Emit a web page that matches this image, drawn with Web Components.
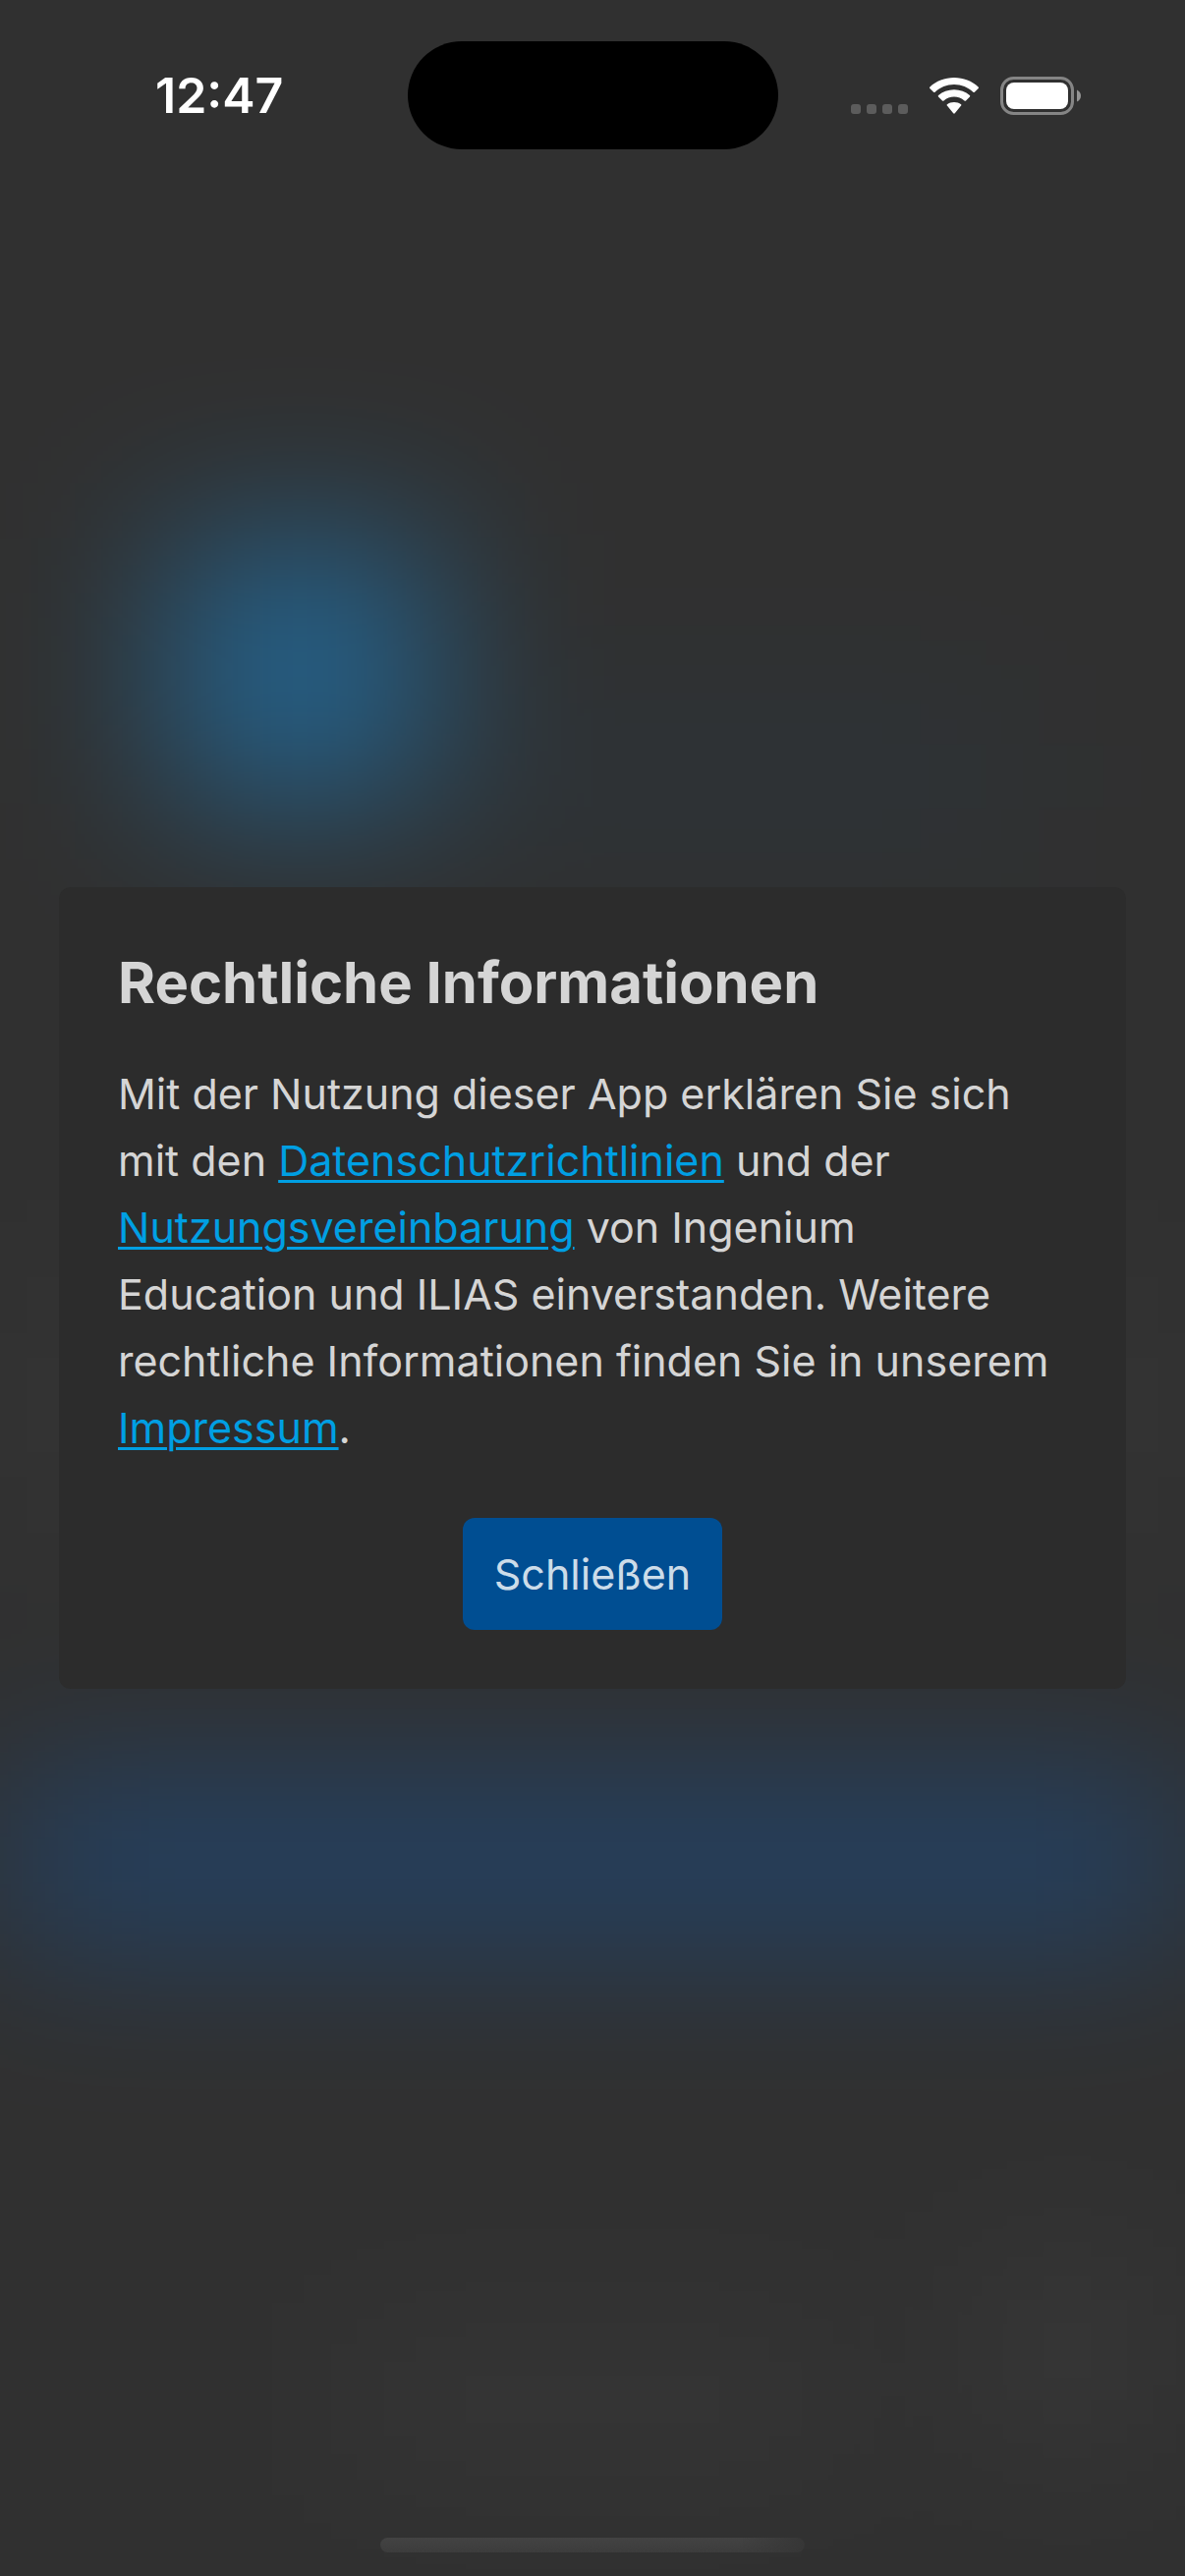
<!DOCTYPE html>
<html lang="de">
<head>
<meta charset="utf-8">
<meta name="viewport" content="width=device-width, initial-scale=1">
<title>Rechtliche Informationen</title>
<style>
  :root {
    --page: #303030;
    --card: #2c2c2c;
    --text: #d5d5d5;
    --link: #009fe3;
    --primary: #004e92;
    --on-primary: #ccdce9;
  }
  body {
    margin: 0;
    background: var(--page);
    color: var(--text);
    font-family: Inter, "Liberation Sans", sans-serif;
  }
</style>
</head>
<body>
<app-screen>
  <status-bar slot="top" time="12:47"></status-bar>
  <info-dialog heading="Rechtliche Informationen">
    Mit der Nutzung dieser App erklären Sie sich mit den
    <text-link href="#datenschutz">Datenschutzrichtlinien</text-link> und der
    <text-link href="#nutzung">Nutzungsvereinbarung</text-link> von Ingenium<br>
    Education und ILIAS einverstanden. Weitere rechtliche Informationen finden Sie in unserem
    <text-link href="#impressum">Impressum</text-link>.
    <primary-button slot="actions">Schließen</primary-button>
  </info-dialog>
  <home-indicator slot="bottom"></home-indicator>
</app-screen>

<script>
  const define = (name, render) =>
    customElements.define(name, class extends HTMLElement {
      connectedCallback() {
        if (this.shadowRoot) return;
        this.attachShadow({ mode: 'open' }).innerHTML = render(this);
      }
    });

  // Full-height screen: status bar, centred content, home indicator, over the blurred start page.
  define('app-screen', () => `
    <style>
      :host { display: flex; flex-direction: column; min-height: 100vh; position: relative; isolation: isolate; }
      .backdrop { position: absolute; inset: 0; overflow: hidden; z-index: -1; }
      /* The opaque border keeps the blur from fading out at the screen edges. */
      .scene { position: absolute; inset: -240px; border: 240px solid var(--page); background: var(--page); filter: blur(84px); }
      .shape { position: absolute; }
      .logo { left: 170px; top: 548px; width: 270px; height: 270px; background: #24618a; }
      .title { left: 500px; top: 730px; width: 530px; height: 120px; background: #2c343a; }
      .login { left: 0; right: 0; top: 1814px; height: 160px; background: #224369; }
      .form { left: 0; right: 0; top: 1300px; height: 260px; background: #343434; }
      .help { right: 40px; bottom: 150px; width: 160px; height: 160px; background: #3a3a3a; }
      .foot { left: 350px; right: 350px; bottom: 130px; height: 100px; background: #383838; }
      main { flex: 1; display: flex; flex-direction: column; justify-content: center; padding: 0 60px; }
    </style>
    <div class="backdrop" aria-hidden="true">
      <div class="scene">
        <div class="shape title"></div>
        <div class="shape logo"></div>
        <div class="shape form"></div>
        <div class="shape login"></div>
        <div class="shape foot"></div>
        <div class="shape help"></div>
      </div>
    </div>
    <slot name="top"></slot>
    <main><slot></slot></main>
    <slot name="bottom"></slot>`);

  define('status-bar', el => `
    <style>
      :host { display: grid; grid-template-columns: 1fr 377px 1fr; height: 110px; padding: 42px 0 0; color: #fff; }
      time { place-self: center; padding-left: 32px; font-size: 50px; font-weight: 600; line-height: 60px; }
      .island { background: #000; border-radius: 55px; }
      .icons { display: flex; align-items: center; justify-content: flex-end; gap: 21px; padding-right: 106px; }
      svg { display: block; }
    </style>
    <time>${el.getAttribute('time')}</time>
    <div class="island"></div>
    <div class="icons">
      <svg width="58" height="40" viewBox="0 0 58 40" fill="#5c5c5c" aria-hidden="true">
        <rect x="0" y="29" width="10" height="10" rx="3"/><rect x="16" y="29" width="10" height="10" rx="3"/>
        <rect x="32" y="29" width="10" height="10" rx="3"/><rect x="48" y="29" width="10" height="10" rx="3"/>
      </svg>
      <svg width="52" height="40" viewBox="0 0 52 40" fill="#fff" aria-hidden="true">
        <path d="M26 9C33.500 9 40.300 11.900 45.400 16.700Q46.200 17.400 46.900 16.700L50.700 12.900Q51.400 12.100 50.600 11.400C44.200 5.500 35.500 2 26 2S7.800 5.500 1.400 11.400Q.6 12.100 1.300 12.900L5.100 16.700Q5.800 17.400 6.600 16.700C11.700 11.900 18.500 9 26 9Z"/>
        <path d="M26 21.500C30 21.500 33.700 23 36.500 25.500Q37.300 26.200 38 25.500L42 21.600Q42.700 20.800 41.900 20.100C37.700 16.300 32.100 14.200 26 14.200S14.300 16.300 10.100 20.100Q9.300 20.800 10 21.600L14 25.500Q14.700 26.200 15.500 25.500C18.300 23 22 21.500 26 21.500Z"/>
        <path d="M33.100 30.600Q33.900 29.900 33.100 29.200C31.200 27.700 28.700 27 26 27S20.800 27.700 18.900 29.200Q18.100 29.900 18.900 30.600L25.200 38.300Q26 39.100 26.800 38.300Z"/>
      </svg>
      <svg width="82" height="40" viewBox="0 0 82 40" aria-hidden="true">
        <rect x="1.500" y="2.500" width="72" height="36" rx="12" fill="none" stroke="#858585" stroke-width="3"/>
        <rect x="6" y="7" width="63" height="27" rx="8" fill="#fff"/>
        <path d="M78 14.500V26.500Q82 24.500 82 20.500T78 14.500Z" fill="#949494"/>
      </svg>
    </div>`);

  define('info-dialog', el => `
    <style>
      :host { display: block; }
      section { display: flex; flex-direction: column; padding: 60px; background: var(--card); border-radius: 12px; }
      h1 { margin: 0 0 42px; font-size: 58px; font-weight: 700; line-height: 74px; }
      p { margin: 0 0 58px; font-size: 43px; line-height: 68px; }
      footer { display: flex; justify-content: center; }
    </style>
    <section role="dialog" aria-labelledby="heading">
      <h1 id="heading">${el.getAttribute('heading')}</h1>
      <p><slot></slot></p>
      <footer><slot name="actions"></slot></footer>
    </section>`);

  define('text-link', el => `
    <style>
      :host { display: inline; }
      a { color: var(--link); text-decoration: underline 3px; text-underline-offset: 4px; }
    </style><a href="${el.getAttribute('href')}"><slot></slot></a>`);

  define('primary-button', () => `
    <style>
      :host { display: block; }
      button {
        display: block; margin: 0; padding: 23px 32px; border: 0; border-radius: 12px;
        background: var(--primary); color: var(--on-primary);
        font: inherit; font-size: 43px; line-height: 68px;
      }
    </style><button type="button"><slot></slot></button>`);

  define('home-indicator', () => `
    <style>
      :host { display: flex; justify-content: center; align-items: flex-end; height: 128px; padding-bottom: 24px; }
      div { width: 432px; height: 15px; border-radius: 8px; background: linear-gradient(to right, #36363600 85%, #363636 100%), linear-gradient(#434343, #3c3c3c); }
    </style><div></div>`);
</script>
</body>
</html>
